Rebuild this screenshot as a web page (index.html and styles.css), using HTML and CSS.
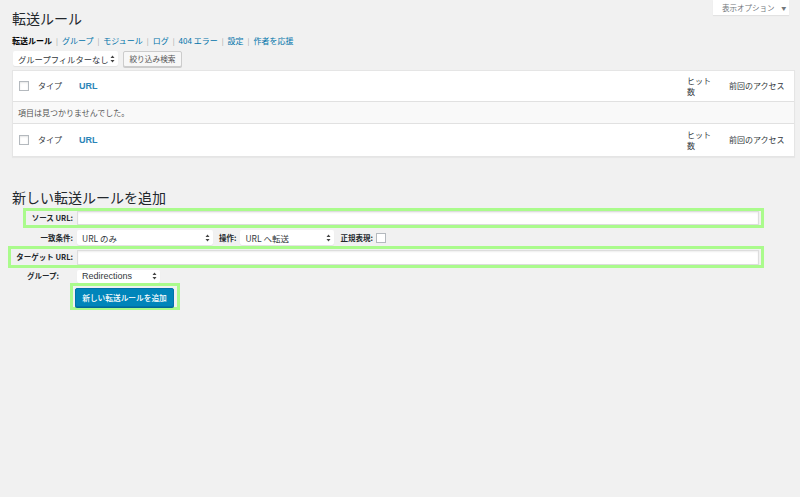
FILE: index.html
```html
<!DOCTYPE html>
<html lang="ja">
<head>
<meta charset="utf-8">
<title>転送ルール</title>
<link rel="stylesheet" href="styles.css">
</head>
<body>
<div class="wrap">
  <div class="topbar">
    <h1 class="title">転送ルール</h1>
    <div class="screen-tab">表示オプション <span class="tri">▼</span></div>
  </div>
  <nav class="subnav">
    <b class="current">転送ルール</b><span class="sep">|</span><a>グループ</a><span class="sep">|</span><a>モジュール</a><span class="sep">|</span><a>ログ</a><span class="sep">|</span><a>404 エラー</a><span class="sep">|</span><a>設定</a><span class="sep">|</span><a>作者を応援</a>
  </nav>
  <div class="filter">
    <div class="select sel-filter"><span>グループフィルターなし</span><svg class="arr" width="5" height="8" viewBox="0 0 5 8"><path d="M2.5 0.5 L4.5 3 H0.5 Z M2.5 7.5 L4.5 5 H0.5 Z" fill="#444"/></svg></div>
    <div class="btn">絞り込み検索</div>
  </div>
  <div class="table">
    <div class="row head">
      <div class="c-cb"><span class="cb"></span></div>
      <div class="c-type">タイプ</div>
      <div class="c-url"><a>URL</a></div>
      <div class="c-hits">ヒット数</div>
      <div class="c-last">前回のアクセス</div>
    </div>
    <div class="row empty">項目は見つかりませんでした。</div>
    <div class="row foot">
      <div class="c-cb"><span class="cb"></span></div>
      <div class="c-type">タイプ</div>
      <div class="c-url"><a>URL</a></div>
      <div class="c-hits">ヒット数</div>
      <div class="c-last">前回のアクセス</div>
    </div>
  </div>
  <h2 class="add-title">新しい転送ルールを追加</h2>
  <div class="form">
    <div class="frow hl source">
      <label class="lbl l-source">ソース URL:</label>
      <div class="input"></div>
    </div>
    <div class="frow match">
      <label class="lbl l-match">一致条件:</label>
      <div class="select sel-match"><span>URL のみ</span><svg class="arr" width="5" height="8" viewBox="0 0 5 8"><path d="M2.5 0.5 L4.5 3 H0.5 Z M2.5 7.5 L4.5 5 H0.5 Z" fill="#444"/></svg></div>
      <label class="lbl l-op">操作:</label>
      <div class="select sel-op"><span>URL へ転送</span><svg class="arr" width="5" height="8" viewBox="0 0 5 8"><path d="M2.5 0.5 L4.5 3 H0.5 Z M2.5 7.5 L4.5 5 H0.5 Z" fill="#444"/></svg></div>
      <label class="lbl l-regex">正規表現:</label>
      <span class="cb cb-regex"></span>
    </div>
    <div class="frow hl target">
      <label class="lbl l-target">ターゲット URL:</label>
      <div class="input"></div>
    </div>
    <div class="frow group">
      <label class="lbl l-group">グループ:</label>
      <div class="select sel-group"><span>Redirections</span><svg class="arr" width="5" height="8" viewBox="0 0 5 8"><path d="M2.5 0.5 L4.5 3 H0.5 Z M2.5 7.5 L4.5 5 H0.5 Z" fill="#444"/></svg></div>
    </div>
    <div class="btn-box">
      <div class="btn-primary">新しい転送ルールを追加</div>
    </div>
  </div>
</div>
</body>
</html>
```
FILE: styles.css
```css
html, body {
  margin: 0;
  padding: 0;
  background: #f1f1f1;
}
body {
  font-family: "Noto Sans CJK JP", "Liberation Sans", sans-serif;
  font-size: 8px;
  line-height: 12px;
  color: #444;
}
.wrap {
  padding: 0 5px 0 12px;
}
a {
  color: #0073aa;
  text-decoration: none;
}
.topbar {
  display: flex;
  justify-content: space-between;
  align-items: flex-start;
}
.title {
  margin: 9px 0 0;
  font-size: 14px;
  line-height: 18px;
  font-weight: 400;
  color: #23282d;
}
.screen-tab {
  width: 76px;
  height: 15px;
  margin-right: 6px;
  background: #fff;
  box-shadow: 0 1px 1px rgba(0,0,0,0.06);
  color: #72777c;
  font-size: 7.5px;
  line-height: 15px;
  box-sizing: border-box;
  padding-left: 9px;
}
.screen-tab .tri {
  font-size: 5px;
  margin-left: 5px;
  vertical-align: 1px;
}
.subnav {
  margin-top: 8px;
  height: 12px;
  display: flex;
  align-items: center;
  font-size: 8px;
  color: #0073aa;
}
.subnav .current {
  color: #000;
  font-weight: 700;
}
.subnav .sep {
  color: #999;
  margin: 0 4px;
  font-size: 7px;
}
.filter {
  margin-top: 4px;
  display: flex;
  gap: 5px;
  height: 16px;
  margin-left: 1px;
}
.select {
  height: 15px;
  background: #fff;
  box-shadow: 0 1px 1px rgba(0,0,0,0.06);
  border-radius: 2px;
  display: flex;
  align-items: center;
  justify-content: space-between;
  box-sizing: border-box;
  padding: 0 3px 0 5px;
  font-size: 8.5px;
  color: #32373c;
}
.select .arr {
  flex: none;
}
.sel-filter {
  width: 105px;
  padding-left: 5px;
  font-size: 8.3px;
}
.btn {
  height: 16px;
  box-sizing: border-box;
  width: 59px;
  border: 1px solid #ccc;
  border-radius: 2px;
  background: #f7f7f7;
  box-shadow: 0 1px 0 #ccc;
  color: #555;
  font-size: 7.7px;
  line-height: 14px;
  text-align: center;
}
.table {
  margin-top: 3px;
  background: #fff;
  border: 1px solid #e5e5e5;
  box-shadow: 0 1px 1px rgba(0,0,0,0.04);
}
.row {
  display: grid;
  grid-template-columns: 21px 41px 1fr 42px 69px;
  align-items: center;
  color: #32373c;
}
.row.head {
  height: 30px;
  border-bottom: 1px solid #e1e1e1;
}
.row.empty {
  display: block;
  height: 21px;
  line-height: 21px;
  background: #f9f9f9;
  padding-left: 5px;
  border-bottom: 1px solid #e1e1e1;
  color: #555;
}
.row.foot {
  height: 32px;
}
.c-cb {
  padding-left: 6px;
  display: flex;
  align-items: center;
}
.cb {
  display: inline-block;
  width: 10px;
  height: 10px;
  box-sizing: border-box;
  border: 1px solid #b4b9be;
  background: #fff;
  box-shadow: inset 0 1px 2px rgba(0,0,0,0.1);
}
.c-type, .c-url, .c-hits, .c-last {
  padding-left: 4px;
}
.c-url a {
  font-family: "Liberation Sans", sans-serif;
  font-size: 9px;
  font-weight: 700;
  color: #2a84b8;
}
.c-hits {
  padding-right: 8px;
  line-height: 11px;
}
.c-last {
  white-space: nowrap;
}
.add-title {
  margin: 31px 0 0;
  font-size: 14px;
  line-height: 18px;
  font-weight: 400;
  color: #23282d;
}
.form {
  margin-top: 2px;
  display: flex;
  flex-direction: column;
  align-items: flex-start;
}
.frow {
  display: flex;
  align-items: center;
}
.hl {
  border: 3px solid #aafb8c;
  box-sizing: border-box;
}
.lbl {
  font-weight: 700;
  font-size: 7.5px;
  color: #23282d;
  white-space: nowrap;
}
.input {
  flex: 1;
  height: 14px;
  box-sizing: border-box;
  border: 1px solid #ddd;
  background: #fff;
  box-shadow: inset 0 1px 2px rgba(0,0,0,0.07);
  margin-right: 2px;
}
.source {
  margin-left: 11px;
  width: 741px;
  height: 20px;
}
.l-source {
  width: 47px;
  text-align: right;
  margin-right: 4px;
}
.match {
  margin-top: 2px;
  height: 15px;
}
.l-match {
  width: 61px;
  text-align: right;
  margin-right: 4px;
}
.sel-match {
  width: 136px;
}
.l-op {
  margin-left: 6px;
  margin-right: 4px;
}
.sel-op {
  width: 94px;
}
.l-regex {
  margin-left: 6px;
  margin-right: 3px;
}
.cb-regex {
  box-shadow: none;
}
.target {
  margin-top: 1px;
  margin-left: -4px;
  width: 756px;
  height: 22px;
}
.target .input {
  height: 15px;
}
.l-target {
  width: 62px;
  text-align: right;
  margin-right: 4px;
}
.group {
  margin-top: 1px;
  height: 14px;
}
.l-group {
  margin-left: 15px;
  width: 50px;
}
.sel-group {
  width: 83px;
  height: 13px;
  font-family: "Liberation Sans", sans-serif;
  font-size: 9px;
}
.btn-box {
  margin-left: 58px;
  margin-top: 0;
  width: 110px;
  height: 27px;
  box-sizing: border-box;
  border: 3px solid #aafb8c;
  padding: 2px 0 0 2px;
}
.btn-primary {
  width: 99px;
  height: 19px;
  box-sizing: border-box;
  background: #0085ba;
  border: 1px solid #0073aa;
  border-radius: 2px;
  box-shadow: 0 1px 0 #006799;
  color: #fff;
  font-size: 7.7px;
  line-height: 17px;
  text-align: center;
  font-weight: 500;
}
```
